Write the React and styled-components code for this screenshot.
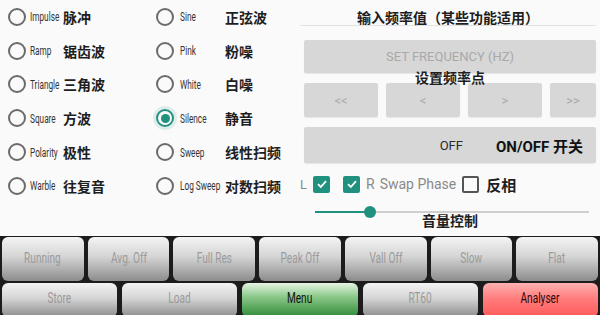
import React from "react";
import styled, { createGlobalStyle } from "styled-components";

const Global = createGlobalStyle`
  html, body { margin: 0; padding: 0; background: #fafafa; }
  body { width: 600px; height: 315px; overflow: hidden; font-family: Roboto, "Noto Sans CJK SC", sans-serif; }
  * { box-sizing: border-box; }
`;

const Page = styled.div`
  width: 600px;
  height: 315px;
  display: flex;
  flex-direction: column;
  background: #fafafa;
`;

const Top = styled.div`
  height: 236px;
  display: grid;
  grid-template-columns: 150px 150px 300px;
`;

const Column = styled.div`
  display: flex;
  flex-direction: column;
`;

const Row = styled.div`
  height: 33.8px;
  display: flex;
  align-items: center;
  padding-left: ${p => p.$pad}px;
`;

const Radio = styled.span`
  width: 18px;
  height: 18px;
  border-radius: 50%;
  border: 2px solid ${p => (p.$on ? "#21917f" : "#6b6b6b")};
  display: flex;
  align-items: center;
  justify-content: center;
  flex: none;
  box-shadow: ${p => (p.$on ? "0 0 0 3px rgba(33,145,127,0.12)" : "none")};
  &::after {
    content: "";
    width: 9px;
    height: 9px;
    border-radius: 50%;
    background: ${p => (p.$on ? "#21917f" : "transparent")};
  }
`;

const EnLabel = styled.span`
  width: ${p => p.$w}px;
  margin-left: ${p => p.$gap}px;
  flex: none;
  font-family: Roboto, sans-serif;
  font-size: 12.5px;
  color: #333;
  white-space: nowrap;
  display: inline-block;
  transform: scaleX(0.66);
  transform-origin: left center;
`;

const CnLabel = styled.span`
  font-family: "Noto Sans CJK SC", sans-serif;
  font-weight: 700;
  font-size: 14px;
  color: #1e1e1e;
  white-space: nowrap;
`;

const Right = styled.div`
  display: flex;
  flex-direction: column;
  padding: 0 4px;
  position: relative;
`;

const Title = styled.div`
  height: 26px;
  display: flex;
  align-items: center;
  justify-content: center;
  padding-top: 9px;
  font-family: "Noto Sans CJK SC", sans-serif;
  font-weight: 700;
  font-size: 14px;
  color: #1e1e1e;
  border-bottom: 1px solid #e2e2e2;
  margin-left: -4px;
`;

const GrayButton = styled.div`
  background: #d7d7d7;
  border-radius: 2px;
  height: ${p => p.$h}px;
  margin-top: ${p => p.$mt || 0}px;
  display: flex;
  align-items: center;
  justify-content: ${p => p.$justify || "center"};
  font-family: Roboto, sans-serif;
  font-size: 13px;
  color: #a9a9a9;
  box-shadow: 0 1px 1px rgba(0, 0, 0, 0.08);
`;

const SubTitle = styled.div`
  height: 14px;
  margin-top: -3px;
  margin-bottom: -1px;
  display: flex;
  align-items: center;
  justify-content: center;
  font-family: "Noto Sans CJK SC", sans-serif;
  font-weight: 700;
  font-size: 14px;
  color: #1e1e1e;
  position: relative;
`;

const ArrowRow = styled.div`
  display: grid;
  grid-template-columns: 74px 74px 74px 1fr;
  gap: 8px;
`;

const OnOff = styled(GrayButton)`
  padding-right: 13px;
  gap: 33px;
`;

const OffText = styled.span`
  font-size: 13px;
  color: #2a2a2a;
`;

const OnOffTitle = styled.span`
  font-family: Roboto, "Noto Sans CJK SC", sans-serif;
  font-weight: 700;
  font-size: 15px;
  color: #111;
`;

const CheckRow = styled.div`
  height: 22px;
  margin-top: 10px;
  margin-left: -4px;
  display: flex;
  align-items: center;
`;

const Plain = styled.span`
  font-family: Roboto, sans-serif;
  font-size: ${p => p.$size || 14}px;
  color: #8a8a8a;
  margin-left: ${p => p.$ml || 0}px;
  white-space: nowrap;
`;

const Check = styled.span`
  width: 17px;
  height: 17px;
  border-radius: 2px;
  margin-left: ${p => p.$ml || 0}px;
  flex: none;
  background: ${p => (p.$on ? "#21917f" : "transparent")};
  border: ${p => (p.$on ? "none" : "2px solid #555")};
  display: flex;
  align-items: center;
  justify-content: center;
`;

const CnBold = styled.span`
  font-family: "Noto Sans CJK SC", sans-serif;
  font-weight: 700;
  font-size: 15px;
  color: #1e1e1e;
  margin-left: ${p => p.$ml || 0}px;
`;

const SliderWrap = styled.div`
  height: 12px;
  margin-top: 11px;
  margin-left: 11px;
  margin-right: 7px;
  position: relative;
  display: flex;
  align-items: center;
`;

const Track = styled.div`
  height: 2px;
  width: 100%;
  background: #cfcfcf;
  display: flex;
`;

const Fill = styled.div`
  height: 2px;
  background: #21917f;
`;

const Thumb = styled.span`
  position: absolute;
  top: 50%;
  width: 12px;
  height: 12px;
  border-radius: 50%;
  background: #21917f;
  transform: translate(-50%, -50%);
`;

const VolumeLabel = styled(SubTitle)`
  margin-top: -5px;
`;

const Bottom = styled.div`
  flex: 1;
  background: #1c1c1c;
  display: flex;
  flex-direction: column;
  gap: 2px;
  padding: 1px 2px 0;
  overflow: hidden;
`;

const BarRow = styled.div`
  display: grid;
  grid-template-columns: repeat(${p => p.$n}, 1fr);
  gap: ${p => p.$gap}px;
  height: ${p => p.$h}px;
  flex: none;
`;

const variants = {
  gray: { bg: "linear-gradient(#f4f4f4, #d4d4d4 45%, #8c8c8c)", color: "#9a9a9a" },
  green: { bg: "linear-gradient(#e6f4e4, #8cc98a 40%, #2f8a37)", color: "#111" },
  red: { bg: "linear-gradient(#ffb2b2, #ff7d7d 45%, #ff5a5a)", color: "#2a0a0a" },
};

const BarButton = styled.div`
  border-radius: 6px;
  background: ${p => variants[p.$v].bg};
  display: flex;
  align-items: center;
  justify-content: center;
  color: ${p => variants[p.$v].color};
  padding-bottom: ${p => p.$pb || 0}px;
`;

const Condensed = styled.span`
  display: inline-block;
  font-family: Roboto, sans-serif;
  font-size: 14px;
  white-space: nowrap;
  transform: scaleX(0.72);
`;

const CheckMark = () => (
  <svg width="12" height="12" viewBox="0 0 12 12">
    <path d="M2 6.2 L4.8 9 L10 3.2" fill="none" stroke="#fff" strokeWidth="1.8" />
  </svg>
);

const col1 = [
  ["Impulse", "脉冲"],
  ["Ramp", "锯齿波"],
  ["Triangle", "三角波"],
  ["Square", "方波"],
  ["Polarity", "极性"],
  ["Warble", "往复音"],
];

const col2 = [
  ["Sine", "正弦波"],
  ["Pink", "粉噪"],
  ["White", "白噪"],
  ["Silence", "静音", true],
  ["Sweep", "线性扫频"],
  ["Log Sweep", "对数扫频"],
];

const row1 = ["Running", "Avg. Off", "Full Res", "Peak Off", "Vall Off", "Slow", "Flat"];
const row2 = [
  ["Store", "gray"],
  ["Load", "gray"],
  ["Menu", "green"],
  ["RT60", "gray"],
  ["Analyser", "red"],
];

export default function App() {
  return (
    <Page>
      <Global />
      <Top>
        <Column>
          {col1.map(([en, cn]) => (
            <Row key={en} $pad={8}>
              <Radio />
              <EnLabel $w={33} $gap={4}>{en}</EnLabel>
              <CnLabel>{cn}</CnLabel>
            </Row>
          ))}
        </Column>
        <Column>
          {col2.map(([en, cn, on]) => (
            <Row key={en} $pad={6}>
              <Radio $on={on} />
              <EnLabel $w={45} $gap={6}>{en}</EnLabel>
              <CnLabel>{cn}</CnLabel>
            </Row>
          ))}
        </Column>
        <Right>
          <Title>输入频率值（某些功能适用）</Title>
          <GrayButton $h={33} $mt={14}>SET FREQUENCY (HZ)</GrayButton>
          <SubTitle>设置频率点</SubTitle>
          <ArrowRow>
            {["<<", "<", ">", ">>"].map(a => (
              <GrayButton key={a} $h={34}>{a}</GrayButton>
            ))}
          </ArrowRow>
          <OnOff $h={36} $mt={10} $justify="flex-end">
            <OffText>OFF</OffText>
            <OnOffTitle>ON/OFF 开关</OnOffTitle>
          </OnOff>
          <CheckRow>
            <Plain $size={13}>L</Plain>
            <Check $on $ml={6}><CheckMark /></Check>
            <Check $on $ml={13}><CheckMark /></Check>
            <Plain $ml={6}>R</Plain>
            <Plain $ml={5}>Swap Phase</Plain>
            <Check $ml={6} />
            <CnBold $ml={7}>反相</CnBold>
          </CheckRow>
          <SliderWrap>
            <Track>
              <Fill style={{ width: "20%" }} />
            </Track>
            <Thumb style={{ left: "20%" }} />
          </SliderWrap>
          <VolumeLabel>音量控制</VolumeLabel>
        </Right>
      </Top>
      <Bottom>
        <BarRow $n={7} $gap={4} $h={44}>
          {row1.map(t => (
            <BarButton key={t} $v="gray" $pb={2}>
              <Condensed>{t}</Condensed>
            </BarButton>
          ))}
        </BarRow>
        <BarRow $n={5} $gap={5} $h={34}>
          {row2.map(([t, v]) => (
            <BarButton key={t} $v={v} $pb={4}>
              <Condensed>{t}</Condensed>
            </BarButton>
          ))}
        </BarRow>
      </Bottom>
    </Page>
  );
}
